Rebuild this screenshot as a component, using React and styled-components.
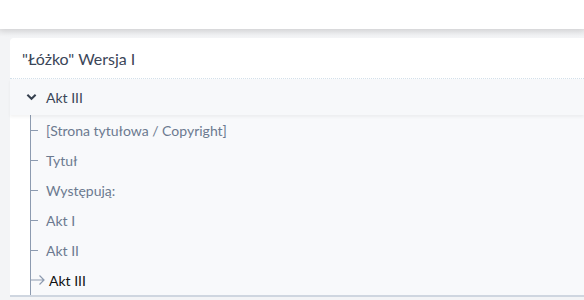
import styled, { createGlobalStyle } from "styled-components";

const GlobalStyle = createGlobalStyle`
    html, body {
        margin: 0;
        padding: 0;
        background: #f3f4f6;
        font-family: Lato, "Noto Sans", sans-serif;
    }
`;

const items = [
    "[Strona tytułowa / Copyright]",
    "Tytuł",
    "Występują:",
    "Akt I",
    "Akt II",
    "Akt III",
];

const App = () => {
    return (
        <>
            <GlobalStyle />
            <Page>
                <TopBar />
                <Body>
                    <Card>
                        <Title>"Łóżko" Wersja I</Title>
                        <Section>
                            <Chevron viewBox="0 0 12 8">
                                <path d="M1.5 1.5 L6 6 L10.5 1.5" />
                            </Chevron>
                            <SectionName>Akt III</SectionName>
                        </Section>
                        <List>
                            {items.map((item, i) => {
                                const active = i === items.length - 1;
                                return (
                                    <Item key={item}>
                                        {active ? (
                                            <Arrow viewBox="0 0 14 10">
                                                <path d="M0 5 H13 M8.5 0.5 L13 5 L8.5 9.5" />
                                            </Arrow>
                                        ) : (
                                            <Dash />
                                        )}
                                        <ItemText active={active}>{item}</ItemText>
                                    </Item>
                                );
                            })}
                        </List>
                    </Card>
                </Body>
            </Page>
        </>
    );
};

const Page = styled.div`
    width: 584px;
    height: 300px;
    overflow: hidden;
    display: flex;
    flex-direction: column;
`;

const TopBar = styled.div`
    height: 29px;
    flex-shrink: 0;
    background: #ffffff;
    box-shadow: 0 2px 6px rgba(0, 0, 0, 0.1);
    position: relative;
    z-index: 1;
`;

const Body = styled.div`
    flex: 1;
    padding: 9px 0 0 10px;
    background: linear-gradient(#e8e8ea, #f3f4f6 8px);
`;

const Card = styled.div`
    background: #ffffff;
    border-radius: 4px 0 0 0;
    border-bottom: 2px solid #cfd6e0;
`;

const Title = styled.div`
    height: 40px;
    display: flex;
    align-items: center;
    padding-left: 12px;
    font-size: 16px;
    color: #3b4658;
    border-bottom: 1px dotted #d3e0ea;
`;

const Section = styled.div`
    height: 36px;
    display: flex;
    align-items: center;
    padding-left: 16px;
    background: #f7f8fa;
    box-shadow: 0 2px 3px rgba(0, 0, 0, 0.05);
    position: relative;
`;

const Chevron = styled.svg`
    width: 11px;
    height: 8px;
    fill: none;
    stroke: #36404f;
    stroke-width: 2.2;
    margin-right: 9px;
`;

const SectionName = styled.span`
    font-size: 14px;
    color: #3b4658;
`;

const List = styled.div`
    background: #f8f9fb;
    margin-left: 20px;
    border-left: 1px solid #8d9bb0;
`;

const Item = styled.div`
    height: 30px;
    display: flex;
    align-items: center;
`;

const Dash = styled.span`
    width: 7px;
    height: 1px;
    background: #8d9bb0;
    margin-right: 8px;
`;

const Arrow = styled.svg`
    width: 14px;
    height: 10px;
    fill: none;
    stroke: #8d9bb0;
    stroke-width: 1.2;
    margin-right: 4px;
`;

const ItemText = styled.span`
    font-size: 14px;
    color: ${(p) => (p.active ? "#111111" : "#6c7a90")};
`;

export default App;
